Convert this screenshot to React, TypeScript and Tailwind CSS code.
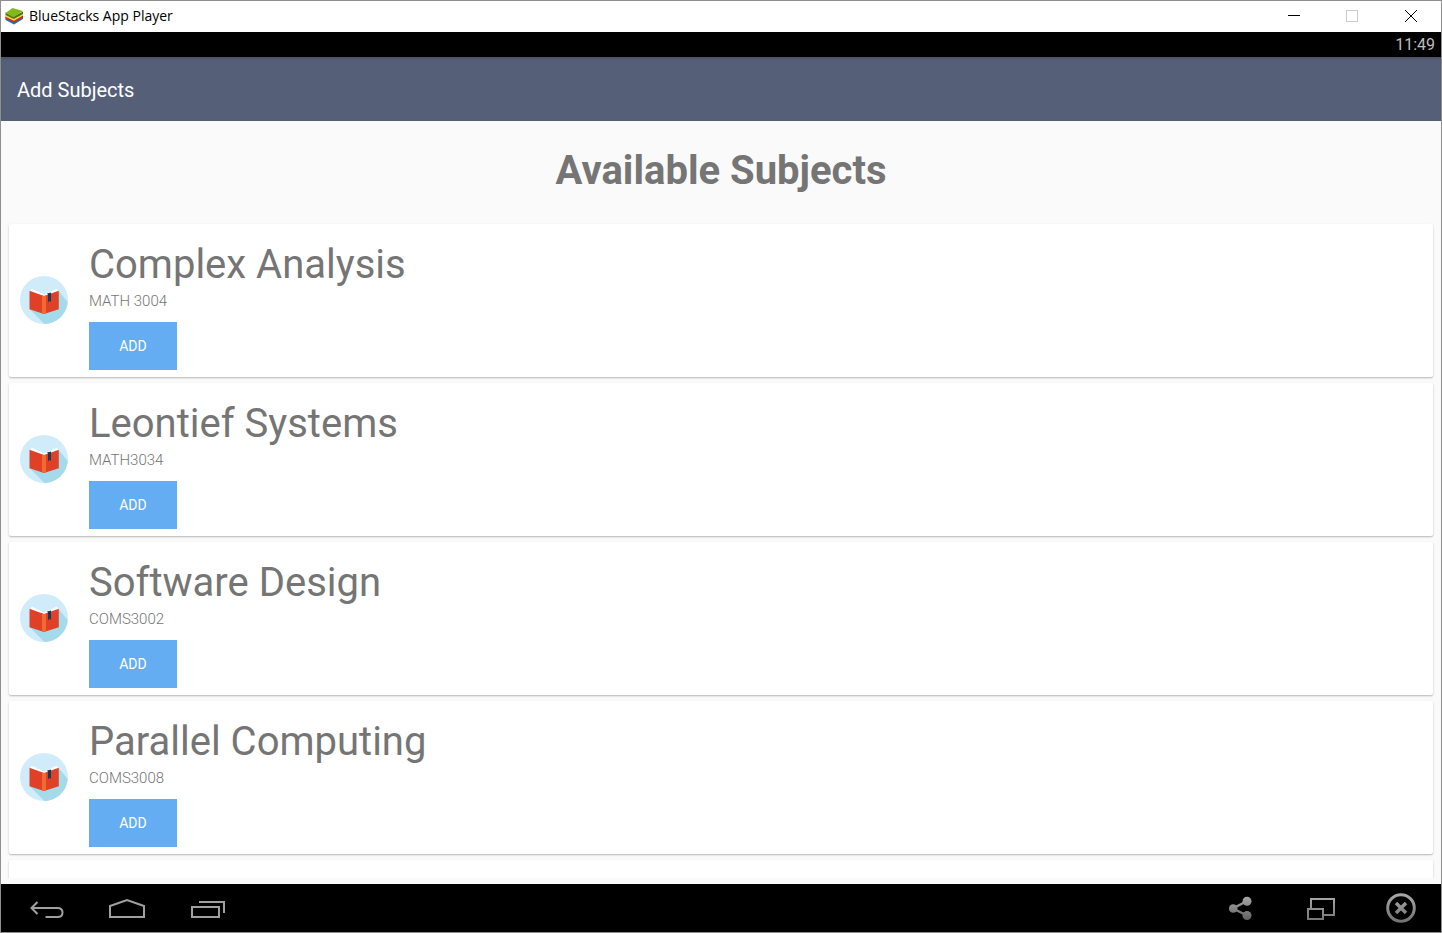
import React from "react";

type Subject = { name: string; code: string };

const subjects: Subject[] = [
  { name: "Complex Analysis", code: "MATH 3004" },
  { name: "Leontief Systems", code: "MATH3034" },
  { name: "Software Design", code: "COMS3002" },
  { name: "Parallel Computing", code: "COMS3008" },
];

function LogoIcon() {
  return (
    <svg width="20" height="18" viewBox="0 0 20 18" aria-hidden="true">
      <path d="M1.500 10 9.500 14l9.500-5v3L10 17.500 1.500 13z" fill="#1c74b5" />
      <path d="M1.500 9 9.500 13l9.500-5v2.500L10 15.500 1.500 11.500z" fill="#d8252c" />
      <path d="M1.500 7.500 9.500 11.500l9.500-5v2L10 13.700 1.500 9.700z" fill="#f9dc2c" />
      <path d="M1.500 5.500 9.500 9.500 19 4.500v2.500L9.800 12 1.500 8z" fill="#3f7d22" />
      <path d="M1.500 6 8.500 1 19 4l-9.500 6.300z" fill="#83b81a" />
    </svg>
  );
}

function BookIcon() {
  return (
    <svg className="mt-[35px] shrink-0" width="48" height="48" viewBox="0 0 48 48" aria-hidden="true">
      <circle cx="24" cy="24" r="24" fill="#d0ecfb" />
      <path d="M39 15.500 47.700 26A24 24 0 0 1 24.500 48L10 33.500z" fill="#a5daea" />
      <path d="M9.500 15 12 12.800 24 18.500 36.500 12.800 39 15v2.500L24 22 9.500 17.500z" fill="#fff" />
      <path d="M9.500 14.700 24 20v18L9.500 33.300z" fill="#e04126" />
      <path d="M24 20 38.800 14.700v18.600L24 38z" fill="#e04126" />
      <path d="M22 19.200 24 20.200 26 19.700v17.800L24 38 22 37.300z" fill="#f26a2e" />
      <path d="M27 17.500 31 16.500v9.500l-1.500-1.300L28 26.500v-7.800z" fill="#173a5e" />
    </svg>
  );
}

function SubjectCard({ subject }: { subject: Subject }) {
  return (
    <li className="flex shrink-0 items-start gap-[21px] rounded-xs bg-white pt-[17px] pr-3 pb-[7px] pl-[11px] shadow-[0_1px_2px_rgba(0,0,0,0.28)]">
      <BookIcon />
      <div className="flex flex-col items-start">
        <h2 className="text-[40px] leading-[48px]">{subject.name}</h2>
        <p className="text-[15px] leading-6 font-light">{subject.code}</p>
        <button
          type="button"
          aria-label={`Add ${subject.name}`}
          className="mt-[9px] h-12 w-[88px] bg-[#64adf3] text-sm text-white"
        >
          ADD
        </button>
      </div>
    </li>
  );
}

function TitleBar() {
  return (
    <header className="flex h-[31px] shrink-0 items-start justify-between bg-white text-black">
      <div className="flex h-[30px] items-center gap-[5px] pl-[3px]">
        <LogoIcon />
        <span className="font-['Open_Sans',sans-serif] text-sm">BlueStacks App Player</span>
      </div>
      <div className="flex">
        <button type="button" aria-label="Minimize" className="flex h-[30px] w-[58px] items-center justify-center">
          <svg width="12" height="12" viewBox="0 0 12 12" stroke="#000">
            <path d="M0 5.500h12" />
          </svg>
        </button>
        <button type="button" disabled aria-label="Maximize" className="flex h-[30px] w-[58px] items-center justify-center">
          <svg width="12" height="12" viewBox="0 0 12 12" stroke="#ccc" fill="none">
            <path d="M.5.5h11v11H.5z" />
          </svg>
        </button>
        <button type="button" aria-label="Close" className="flex h-[30px] w-[60px] items-center justify-center">
          <svg width="12" height="12" viewBox="0 0 12 12" stroke="#000">
            <path d="M0 0l12 12M12 0 0 12" />
          </svg>
        </button>
      </div>
    </header>
  );
}

function NavButton({ label, children }: { label: string; children: React.ReactNode }) {
  return (
    <button type="button" aria-label={label} className="flex h-12 w-20 items-center justify-center">
      {children}
    </button>
  );
}

function NavBar() {
  return (
    <nav className="flex h-12 shrink-0 justify-between bg-black">
      <div className="flex pl-[6px]">
        <NavButton label="Back">
          <svg width="36" height="24" viewBox="0 0 36 24" fill="none" stroke="#a0a0a0" strokeWidth="2">
            <path d="M8.500 6 2.500 12l6 6M2.500 12H28.500q5 0 5 4.500t-5 4.500H16.500" />
          </svg>
        </NavButton>
        <NavButton label="Home">
          <svg width="36" height="24" viewBox="0 0 36 24" fill="none" stroke="#a0a0a0" strokeWidth="2">
            <path d="M1 21V10l17-6 17 6v11z" />
          </svg>
        </NavButton>
        <NavButton label="Recent apps">
          <svg width="36" height="24" viewBox="0 0 36 24" fill="none" stroke="#a0a0a0" strokeWidth="2">
            <path d="M3 11h27v10H3zM10 6h25v11" />
          </svg>
        </NavButton>
      </div>
      <div className="flex">
        <NavButton label="Share">
          <svg width="24" height="24" viewBox="0 0 24 24" fill="url(#metal)" stroke="none">
            <defs>
              <linearGradient id="metal" gradientUnits="userSpaceOnUse" x1="0" y1="0" x2="0" y2="24">
                <stop offset="0" stopColor="#aaa" />
                <stop offset="1" stopColor="#626262" />
              </linearGradient>
            </defs>
            <path d="M18 5 4 12.500 18 19.500" fill="none" stroke="url(#metal)" strokeWidth="2.500" />
            <circle cx="4.200" cy="12.500" r="4.300" />
            <circle cx="18" cy="5.200" r="4.500" />
            <circle cx="18" cy="19.500" r="4.500" />
          </svg>
        </NavButton>
        <NavButton label="Toggle full screen">
          <svg width="28" height="24" viewBox="0 0 28 24" fill="none" strokeWidth="2">
            <defs>
              <linearGradient id="metalLine" gradientUnits="userSpaceOnUse" x1="0" y1="0" x2="0" y2="24">
                <stop offset="0" stopColor="#aaa" />
                <stop offset="1" stopColor="#777" />
              </linearGradient>
            </defs>
            <path d="M4 12V3h23v16H17M1 13h15v10H1z" stroke="url(#metalLine)" />
          </svg>
        </NavButton>
        <NavButton label="Close app">
          <svg width="30" height="30" viewBox="0 0 30 30" fill="none">
            <defs>
              <linearGradient id="metalRing" gradientUnits="userSpaceOnUse" x1="0" y1="0" x2="0" y2="30">
                <stop offset="0" stopColor="#aaa" />
                <stop offset="1" stopColor="#707070" />
              </linearGradient>
            </defs>
            <circle cx="15" cy="15" r="13.300" stroke="url(#metalRing)" strokeWidth="3" />
            <path d="M10 10l10 10M20 10 10 20" stroke="url(#metalRing)" strokeWidth="3.500" />
          </svg>
        </NavButton>
      </div>
    </nav>
  );
}

export default function App() {
  return (
    <div className="flex h-screen flex-col border border-[#8f8f8f] bg-[#fafafa] font-[Roboto,sans-serif] text-[#757575]">
      <TitleBar />
      <div className="flex h-[25px] shrink-0 items-center justify-end bg-black pr-[6px] text-base text-[#bdbdbd]">11:49</div>
      <div className="flex h-16 shrink-0 items-center bg-[#555f77] px-4 pt-[2px] text-xl text-white shadow-[inset_0_2px_2px_rgba(0,0,0,0.12)]">
        Add Subjects
      </div>
      <main className="flex min-h-0 flex-1 flex-col pb-[6px]">
        <h1 className="shrink-0 pt-[26px] pb-[23px] text-center text-[40px] leading-[48px] font-bold">Available Subjects</h1>
        <ul className="flex min-h-0 flex-1 flex-col gap-[6px] overflow-hidden px-2 pt-[6px]">
          {subjects.map((subject) => (
            <SubjectCard key={subject.code} subject={subject} />
          ))}
          <li aria-hidden="true" className="h-[153px] shrink-0 rounded-xs bg-white shadow-[0_1px_2px_rgba(0,0,0,0.28)]" />
        </ul>
      </main>
      <NavBar />
    </div>
  );
}
